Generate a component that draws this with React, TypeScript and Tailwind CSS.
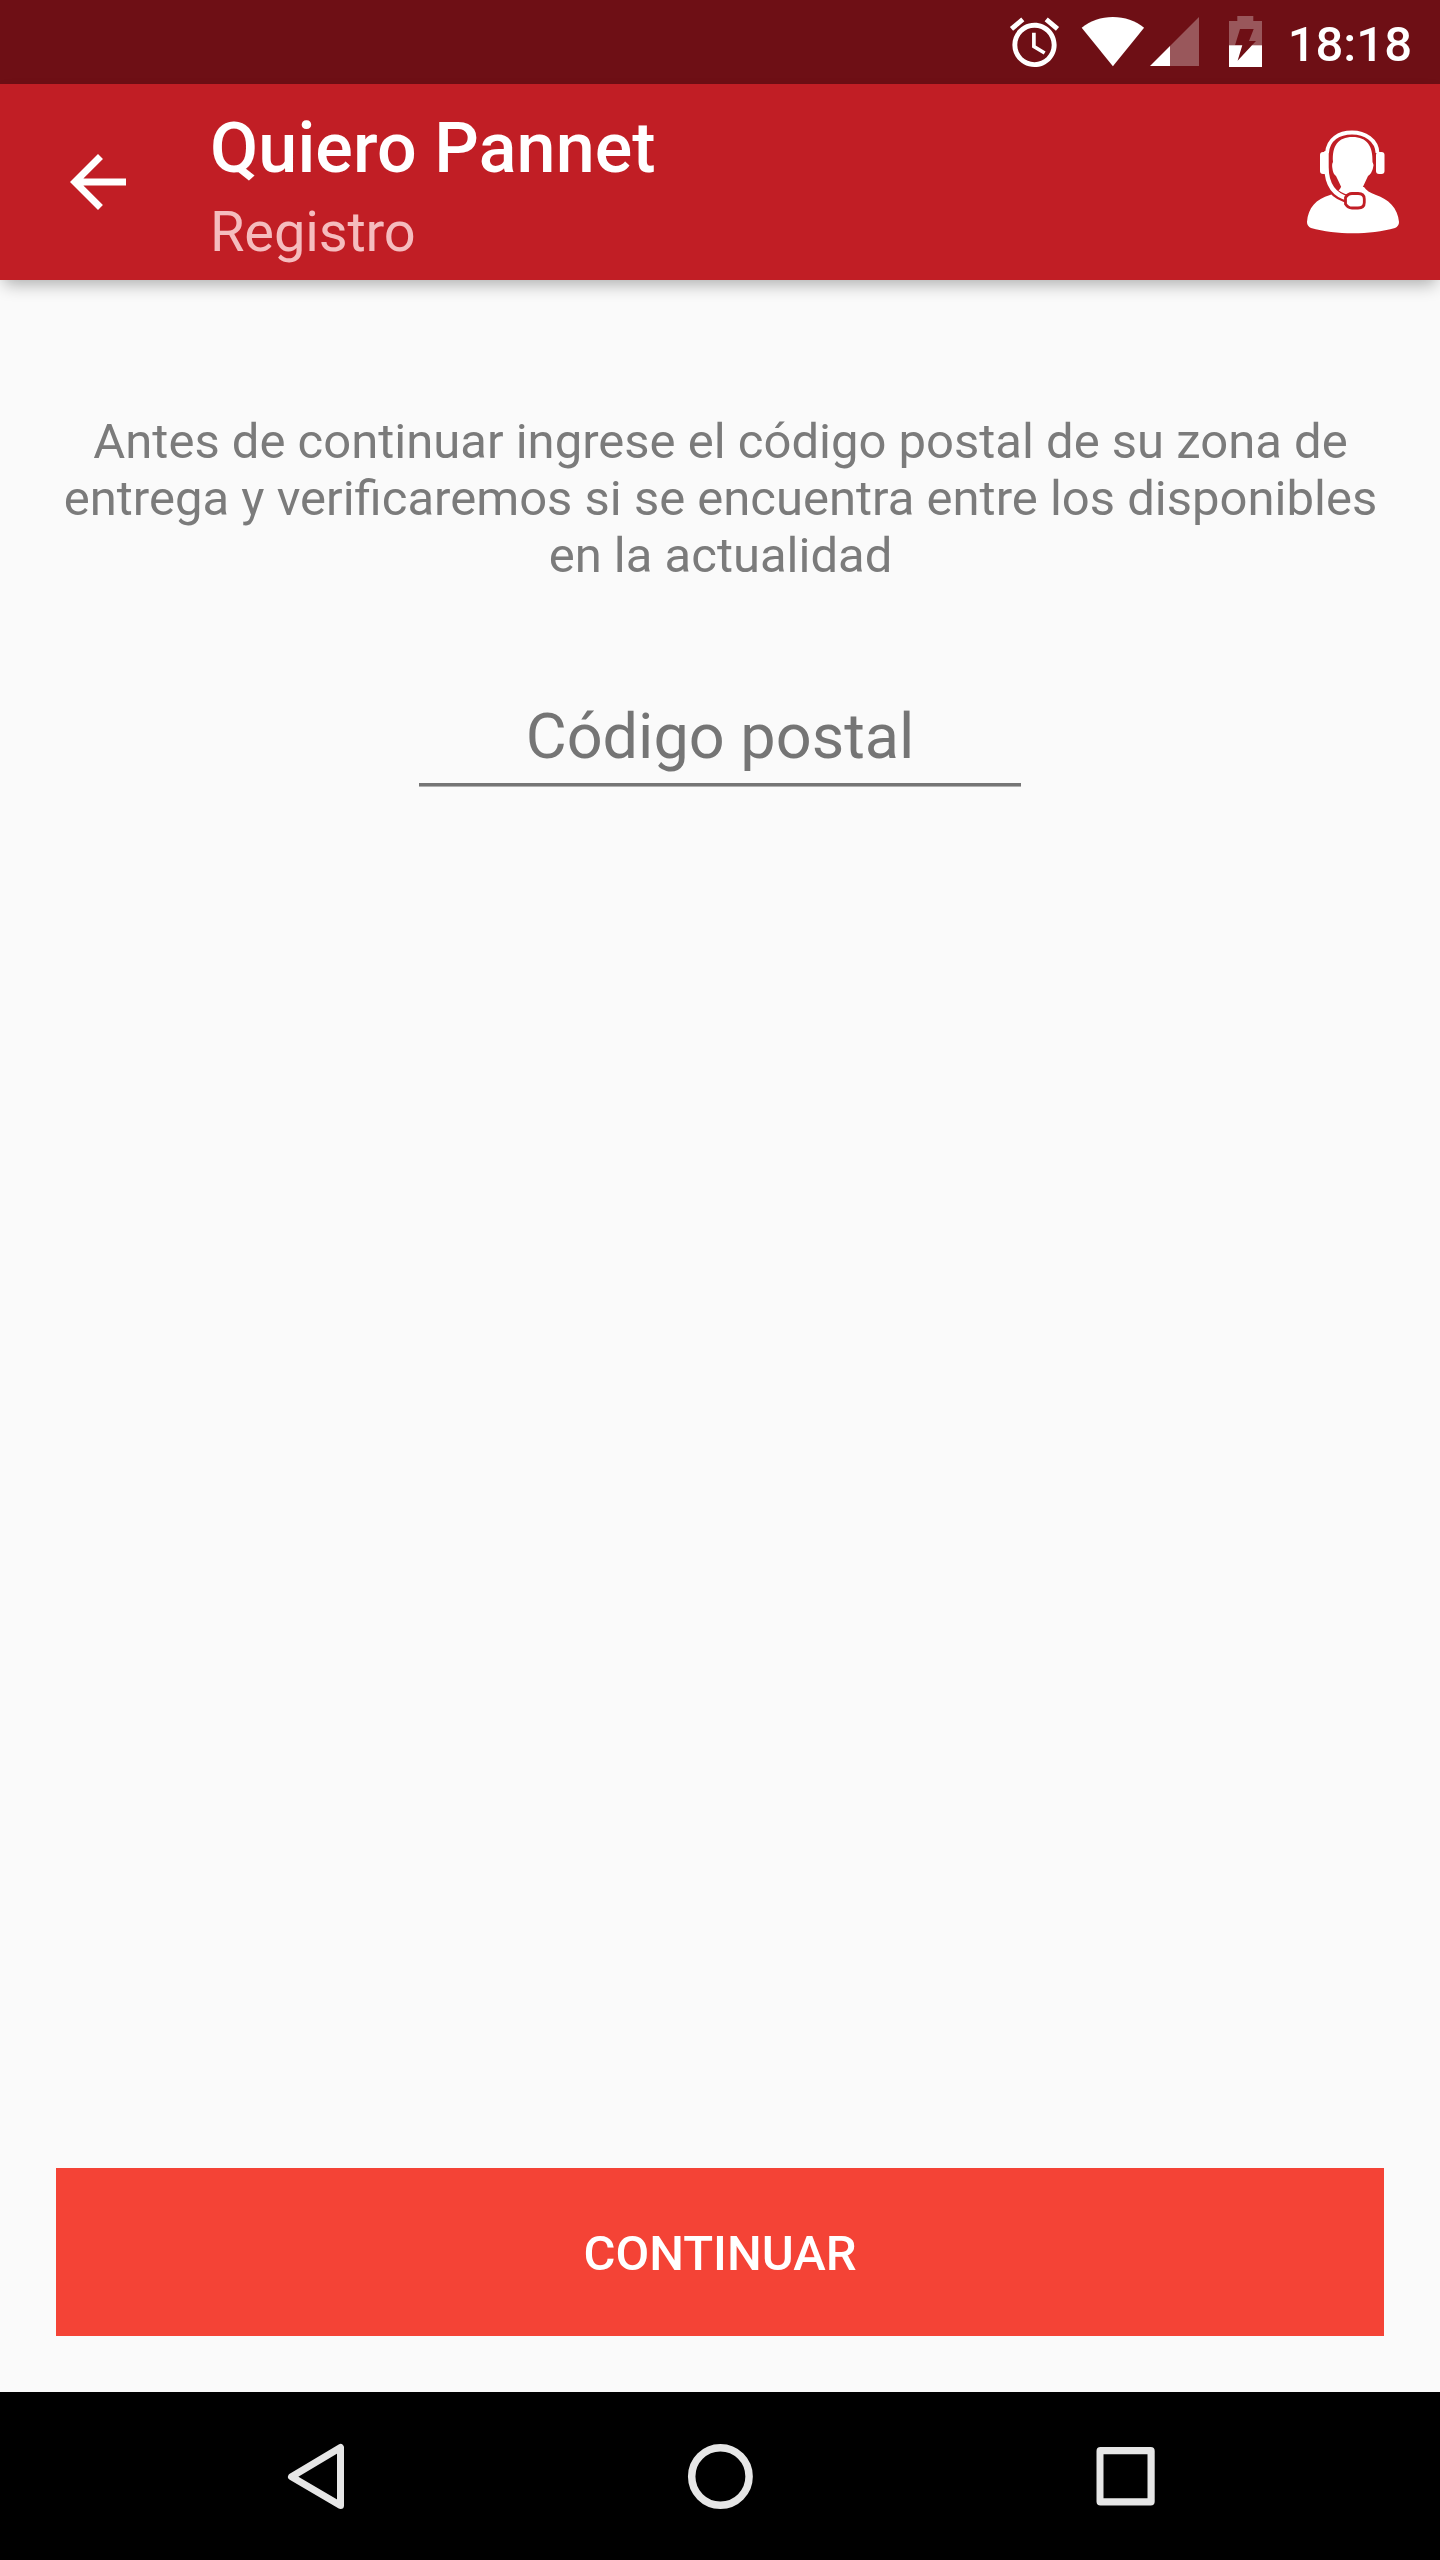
function AlarmIcon() {
  return (
    <svg viewBox="0 0 24 24" className="mt-[13px] h-[59px] w-[59px] fill-white">
      <path d="M22 5.72l-4.6-3.86-1.29 1.53 4.6 3.86L22 5.72zM7.88 3.39L6.6 1.86 2 5.71l1.29 1.53 4.59-3.85zM12.5 8H11v6l4.75 2.85.75-1.23-4-2.37V8zM12 4c-4.97 0-9 4.03-9 9s4.02 9 9 9c4.97 0 9-4.03 9-9s-4.03-9-9-9zm0 16c-3.87 0-7-3.13-7-7s3.13-7 7-7 7 3.13 7 7-3.13 7-7 7z" />
    </svg>
  );
}

function WifiIcon() {
  return (
    <svg viewBox="0 0 64 84" className="ml-[17px] h-[84px] w-16 fill-white">
      <path d="M0.7 27.7C9.5 20.5 20 17 31.9 17S54.3 20.5 63.1 27.7L31.9 66.2z" />
    </svg>
  );
}

function SignalIcon() {
  return (
    <svg viewBox="0 0 50 84" className="ml-[5px] h-[84px] w-[50px] fill-white">
      <path d="M49 17V66H20V46z" opacity="0.3" />
      <path d="M20 46V66H0z" />
    </svg>
  );
}

function BatteryIcon() {
  return (
    <svg viewBox="0 0 33 84" className="ml-[29px] h-[84px] w-[33px] fill-white">
      <path d="M8.3 16H24.3V21H33V45.3H23L27 41H20L24.7 29H11L6 45.3H0V21H8.3z" opacity="0.3" />
      <path d="M0 45.3H13.3L8.6 60.7L23 45.3H33V67H0z" />
    </svg>
  );
}

function StatusBar() {
  return (
    <div className="flex h-[84px] items-start justify-end bg-[#6e0f15] pr-7">
      <AlarmIcon />
      <WifiIcon />
      <SignalIcon />
      <BatteryIcon />
      <span className="ml-[26px] mt-4 text-[49px] font-medium leading-[57px] text-white">18:18</span>
    </div>
  );
}

function SupportIcon() {
  return (
    <svg viewBox="0 0 94 106" className="mt-[45px] h-[106px] w-[94px]">
      {/* shoulders */}
      <path
        d="M35 58C33 62 30 64 24 66C10 70 2 79 1 93Q1 97 5 99C30 106 64 106 89 99Q93 97 93 93C92 79 82 70 70 66C64 64 60 61 58 58z"
        fill="#fff"
      />
      {/* head */}
      <path
        d="M46.5 8C32 8 26 17 27 33Q25.5 35 26.5 40Q27 45 30 47Q33 53 37 62Q46 70 55 62L62 47Q66 44 67 39Q68 35 66.5 33C67 17 61 8 46.5 8z"
        fill="#fff"
      />
      {/* headset */}
      <path d="M21 24C22 10 33 3.5 46 3.5S71 11 71.5 24" fill="none" stroke="#fff" strokeWidth="3.8" />
      <path d="M21 38C20 56 27 67 44 70.5" fill="none" stroke="#c11e25" strokeWidth="8" />
      <path d="M20.5 22V38C20.5 55 27 66 43 70" fill="none" stroke="#fff" strokeWidth="4.4" />
      <rect x="14" y="23" width="8" height="22" rx="3" fill="#fff" />
      <rect x="70" y="23" width="8.5" height="22" rx="3" fill="#fff" />
      <path
        d="M39.5 68.5Q42 64.5 46 64.5H52Q58.3 64.5 58.3 70V73.5Q58.3 79 52 79H46Q42 79 39.5 75z"
        fill="#fff"
        stroke="#c11e25"
        strokeWidth="2.8"
      />
    </svg>
  );
}

function AppBar() {
  return (
    <header className="relative flex h-[196px] items-start bg-[#c11e25] pl-14 pr-10 shadow-[0_8px_16px_-4px_rgba(0,0,0,0.32)]">
      <button type="button" aria-label="Volver" className="mt-14">
        <svg viewBox="0 0 24 24" className="h-[84px] w-[84px] fill-white">
          <path d="M20 11H7.83l5.59-5.59L12 4l-8 8 8 8 1.41-1.41L7.83 13H20v-2z" />
        </svg>
      </button>
      <div className="ml-[70px] flex-1">
        <h1 className="mt-[23px] text-[70px] font-medium leading-[82px] tracking-[0.12px] text-white">Quiero Pannet</h1>
        <p className="mt-[10px] text-[56px] leading-[66px] tracking-[-0.15px] text-[#f5bcbe]">Registro</p>
      </div>
      <SupportIcon />
    </header>
  );
}

function NavBar() {
  return (
    <nav className="flex h-[168px] justify-center gap-[125px] bg-black">
      <svg viewBox="0 0 280 168" className="h-[168px] w-[280px]">
        <path d="M165.5 55.5V113.5L116.5 84.7z" fill="none" stroke="#e6e6e6" strokeWidth="7" strokeLinejoin="round" />
      </svg>
      <svg viewBox="0 0 280 168" className="h-[168px] w-[280px]">
        <circle cx="140.4" cy="84.5" r="28.7" fill="none" stroke="#e6e6e6" strokeWidth="7.5" />
      </svg>
      <svg viewBox="0 0 280 168" className="h-[168px] w-[280px]">
        <path
          fillRule="evenodd"
          d="M115.5 55H165.7Q169.7 55 169.7 59V109.5Q169.7 113.5 165.7 113.5H115.5Q111.5 113.5 111.5 109.5V59Q111.5 55 115.5 55zM118.5 62.3V106.3H162.5V62.3z"
          fill="#e6e6e6"
        />
      </svg>
    </nav>
  );
}

export default function App() {
  return (
    <div className="flex h-[2560px] w-[1440px] flex-col bg-[#fafafa] font-['Roboto',sans-serif]">
      <StatusBar />
      <AppBar />
      <main className="flex flex-1 flex-col items-center px-14 pb-14">
        <p className="mt-[133px] pl-px text-center text-[49px] leading-[57px] text-[#7b7b7b]">
          Antes de continuar ingrese el código postal de su zona de entrega y verificaremos si se encuentra entre los
          disponibles en la actualidad
        </p>
        <div className="mt-[116px] h-[86px] w-[602px] border-b-3 border-[#757575] text-center text-[63px] leading-[74px] text-[#757575] shadow-[0_1px_0_#b0b0b0]">
          Código postal
        </div>
        <button
          type="button"
          className="mt-auto h-[168px] w-full bg-[#f44336] pt-[2px] text-[49px] font-medium leading-[57px] text-white"
        >
          CONTINUAR
        </button>
      </main>
      <NavBar />
    </div>
  );
}
